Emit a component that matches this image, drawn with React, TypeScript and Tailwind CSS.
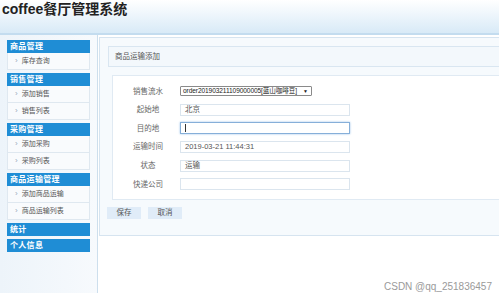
import React from 'react';

const menu = [
  { title: '商品管理', items: ['库存查询'] },
  { title: '销售管理', items: ['添加销售', '销售列表'] },
  { title: '采购管理', items: ['添加采购', '采购列表'] },
  { title: '商品运输管理', items: ['添加商品运输', '商品运输列表'] },
  { title: '统计', items: [] as string[] },
  { title: '个人信息', items: [] as string[] },
];

const Field = ({ label, children }: { label: string; children: React.ReactNode }) => (
  <div className="flex items-center h-[18.6px]">
    <div className="w-[67px] pl-[3px] text-center text-[7.5px] text-[#666]">{label}</div>
    {children}
  </div>
);

const Input = ({ value, focused }: { value?: string; focused?: boolean }) => (
  <div
    className={`w-[170px] h-[12px] flex items-center pl-[4px] text-[7.5px] text-[#555] bg-white border ${
      focused ? 'border-[#86afd9] shadow-[0_0_2px_#9cc2e8]' : 'border-[#dbe5ee]'
    }`}
  >
    {value}
    {focused && <span className="w-[1px] h-[8px] bg-[#333]" />}
  </div>
);

export default function App() {
  return (
    <div
      className="relative w-[499px] h-[293px] overflow-hidden flex flex-col bg-white"
      style={{ fontFamily: '"Liberation Sans", "Noto Sans CJK SC", sans-serif' }}
    >
      {/* top bar */}
      <div className="h-[35px] shrink-0 bg-gradient-to-b from-white to-[#d8eaf7] border-b-2 border-[#c3dcef]">
        <h1 className="pl-[2px] pt-[1px] text-[14px] leading-[17px] font-bold text-[#222]">coffee餐厅管理系统</h1>
      </div>

      <div className="flex flex-1">
        {/* sidebar */}
        <aside className="w-[98px] shrink-0 border-r border-[#cddfed] bg-gradient-to-r from-[#edf4fa] to-[#f7fafd] pt-[5px] pl-[7px] pr-[7px] flex flex-col gap-[3px]">
          {menu.map((group) => (
            <div key={group.title}>
              <div className="h-[13px] bg-[#1f8dd5] text-white font-bold text-[8px] pl-[3px] flex items-center tracking-[0.3px]">
                {group.title}
              </div>
              {group.items.map((item) => (
                <div
                  key={item}
                  className="h-[17px] bg-[#f9fbfd] border-x border-b border-[#dfe8f0] flex items-center pl-[7px] text-[7px] text-[#555]"
                >
                  <span className="text-[#9ab] mr-[4px] text-[8px]">›</span>
                  {item}
                </div>
              ))}
            </div>
          ))}
        </aside>

        {/* main */}
        <main className="flex-1 pt-[2px] pl-[1px]">
          <div className="border border-r-0 border-[#d6e4f0] bg-[#f6fafd] pt-[8px] pl-[8px] pb-[16px]">
            <div className="h-[21px] border border-r-0 border-[#d9e6f1] bg-[#f3f8fc] pl-[6px] flex items-center text-[7.5px] text-[#555]">
              商品运输添加
            </div>

            <div className="mt-[8px] ml-[4px] border border-r-0 border-[#e0eaf3] bg-white pt-[6px] pb-[5px]">
              <Field label="销售流水">
                <div className="w-[132px] h-[10px] border border-[#8a8a8a] rounded-[1px] bg-white flex items-center justify-between pl-[2px] pr-[3px] text-[6.6px] text-[#222] whitespace-nowrap overflow-hidden">
                  <span className="tracking-[-0.1px]">order201903211109000005[蓝山咖啡豆]</span>
                  <span className="text-[5px] ml-[2px]">▼</span>
                </div>
              </Field>
              <Field label="起始地">
                <Input value="北京" />
              </Field>
              <Field label="目的地">
                <Input focused />
              </Field>
              <Field label="运输时间">
                <Input value="2019-03-21 11:44:31" />
              </Field>
              <Field label="状态">
                <Input value="运输" />
              </Field>
              <Field label="快递公司">
                <Input />
              </Field>
            </div>

            <div className="mt-[7px] -ml-[1px] flex gap-[7px]">
              <button className="w-[34px] h-[12px] bg-[#e0ecf8] text-[7.5px] text-[#555] flex items-center justify-center">保存</button>
              <button className="w-[34px] h-[12px] bg-[#e0ecf8] text-[7.5px] text-[#555] flex items-center justify-center">取消</button>
            </div>
          </div>
        </main>
      </div>

      {/* watermark */}
      <div className="absolute right-[7px] bottom-[0px] text-[10px] leading-[12px] text-[#9a9a9a]">CSDN @qq_251836457</div>
    </div>
  );
}
